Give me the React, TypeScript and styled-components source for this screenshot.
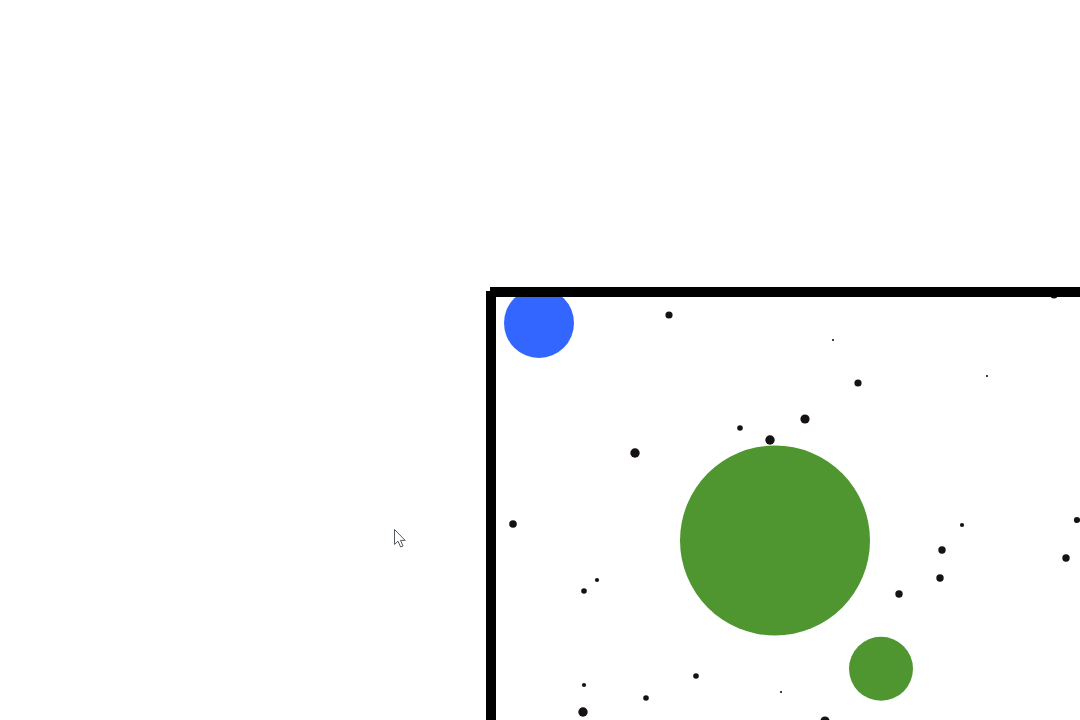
import React from 'react'
import styled, { createGlobalStyle } from 'styled-components'

const GlobalStyle = createGlobalStyle`
  html, body {
    margin: 0;
    padding: 0;
    background: #ffffff;
    overflow: hidden;
  }
`

const Stage = styled.div`
  position: relative;
  width: 1080px;
  height: 720px;
  background: #ffffff;
  overflow: hidden;
`

const Field = styled.svg`
  display: block;
  width: 1080px;
  height: 720px;
`

const Pointer = styled.svg`
  position: absolute;
  left: ${({ $x }: { $x: number; $y: number }) => $x}px;
  top: ${({ $y }) => $y}px;
  width: 14px;
  height: 21px;
`

type Blob = { x: number; y: number; r: number; color: string }

const FOOD: [number, number, number][] = [
  [669, 315, 3.6],
  [833, 340, 1.1],
  [858, 383, 3.6],
  [987, 376, 1.1],
  [805, 419, 4.6],
  [740, 428, 2.8],
  [770, 440, 4.7],
  [635, 453, 4.7],
  [513, 524, 3.8],
  [962, 525, 2.1],
  [1077, 520, 3.1],
  [942, 550, 3.7],
  [1066, 558, 3.7],
  [940, 578, 3.7],
  [899, 594, 3.7],
  [597, 580, 2.1],
  [584, 591, 2.8],
  [584, 685, 2.1],
  [646, 698, 2.8],
  [696, 676, 2.8],
  [781, 692, 1.1],
  [583, 712, 4.7],
  [825, 721, 4.6],
  [1054, 295, 3.6],
]

const CELLS: Blob[] = [
  { x: 539, y: 323, r: 35, color: '#3366ff' },
  { x: 775, y: 540.5, r: 95, color: '#4f9631' },
  { x: 881, y: 668.8, r: 32, color: '#4f9631' },
]

export default function App() {
  return (
    <>
      <GlobalStyle />
      <Stage>
        <Field viewBox="0 0 1080 720">
          {FOOD.map(([x, y, r], i) => (
            <circle key={i} cx={x} cy={y} r={r} fill="#161214" />
          ))}
          {CELLS.map((c, i) => (
            <circle key={'c' + i} cx={c.x} cy={c.y} r={c.r} fill={c.color} />
          ))}
          {/* arena edge */}
          <rect x={490} y={287} width={600} height={10} fill="#000000" />
          <rect x={486} y={291} width={10} height={440} fill="#000000" />
        </Field>
        <Pointer $x={393} $y={528} viewBox="0 0 14 21">
          <path
            d="M1.5 1.5 L1.5 16.5 L5 13.2 L7.6 19 L10 18 L7.5 12.4 L12.2 12.4 Z"
            fill="#ffffff"
            stroke="#555a60"
            strokeWidth={1}
            strokeLinejoin="round"
          />
        </Pointer>
      </Stage>
    </>
  )
}
